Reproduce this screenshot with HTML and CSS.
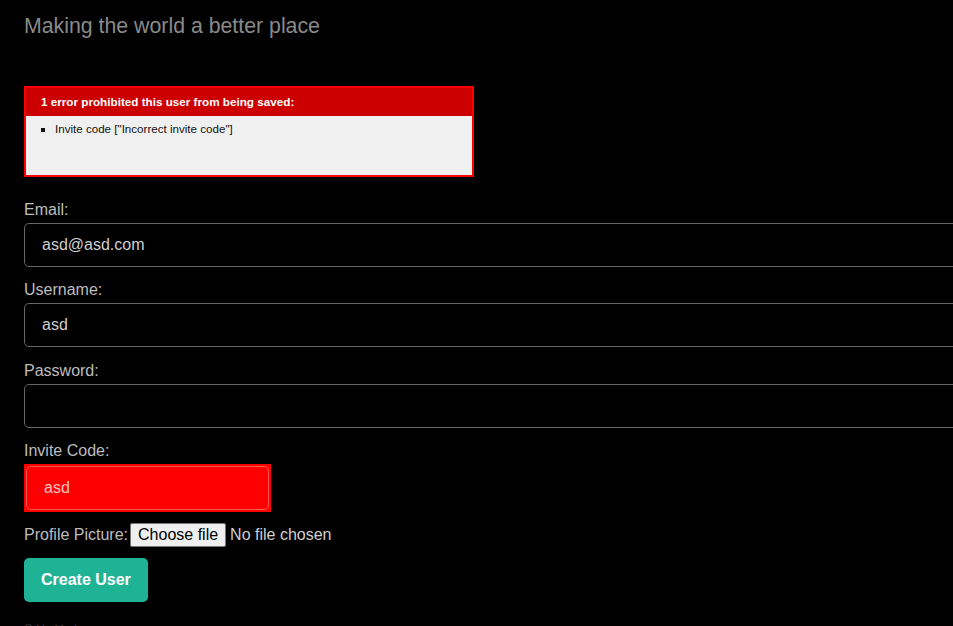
FILE: index.html
```html
<!DOCTYPE html>
<html>
<head>
<meta charset="utf-8">
<title>New User</title>
<link rel="stylesheet" href="styles.css">
</head>
<body>
<div class="page">
  <h1 class="tagline">Making the world a better place</h1>

  <form class="user-form">
    <div class="error-explanation">
      <h2>1 error prohibited this user from being saved:</h2>
      <ul>
        <li>Invite code ["Incorrect invite code"]</li>
      </ul>
    </div>

    <div class="field">
      <label class="field-label">Email:</label>
      <input class="text-input" type="text" value="asd@asd.com">
    </div>
    <div class="field">
      <label class="field-label">Username:</label>
      <input class="text-input" type="text" value="asd">
    </div>
    <div class="field">
      <label class="field-label">Password:</label>
      <input class="text-input" type="password" value="">
    </div>
    <div class="field">
      <label class="field-label">Invite Code:</label>
      <div class="field-with-errors">
        <input class="text-input error-input" type="text" value="asd">
      </div>
    </div>
    <div class="file-row">
      <span class="file-label">Profile Picture:</span>
      <button class="file-button" type="button">Choose file</button>
      <span class="file-status">No file chosen</span>
    </div>
    <div class="actions">
      <button class="submit-btn" type="button">Create User</button>
    </div>
  </form>

  <footer class="footer">© Untitled</footer>
</div>
</body>
</html>
```

FILE: styles.css
```css
html, body {
  margin: 0;
  padding: 0;
  background: #000;
  overflow: hidden;
}

body {
  font-family: "Liberation Sans", Arial, sans-serif;
  color: #bdbdbd;
}

.page {
  padding: 12px 24px 0 24px;
}

.tagline {
  margin: 0;
  font-size: 21.3px;
  font-weight: normal;
  line-height: 28px;
  color: #8a8a8a;
}

.user-form {
  margin-top: 46px;
  width: 1000px;
}

.error-explanation {
  width: 450px;
  box-sizing: border-box;
  border: 2px solid #ff0000;
  background: #f0f0f0;
  height: 91px;
  margin-bottom: 24px;
}

.error-explanation h2 {
  margin: 0;
  height: 28px;
  line-height: 28px;
  padding-left: 15px;
  background: #cc0000;
  color: #fff;
  font-size: 11.7px;
  font-weight: bold;
}

.error-explanation ul {
  margin: 5px 0 0 0;
  padding-left: 29px;
}

.error-explanation li {
  list-style: square;
  font-size: 11.6px;
  line-height: 15px;
  color: #111;
}

.field {
  margin-bottom: 14.33px;
}

.field-label {
  display: block;
  font-size: 16px;
  line-height: 18.4px;
  color: #bdbdbd;
}

.text-input {
  display: block;
  margin-top: 3.6px;
  width: 1000px;
  height: 44px;
  box-sizing: border-box;
  padding: 0 17px;
  background: #000;
  border: 1px solid #666;
  border-radius: 5px;
  color: #cfcfcf;
  font-family: "Liberation Sans", Arial, sans-serif;
  font-size: 16px;
  outline: none;
}

.field-with-errors {
  display: inline-block;
  margin-top: 3.6px;
  padding: 2px;
  background: #ff0000;
}

.field-with-errors .error-input {
  margin-top: 0;
  width: 243px;
  background: #ff0000;
  border-color: #ff5a5a;
  color: #ffc4c4;
}

.file-row {
  display: flex;
  align-items: center;
  margin-top: -3px;
  font-size: 16px;
  color: #bdbdbd;
}

.file-label {
  margin-right: 2px;
}

.file-button {
  height: 24px;
  box-sizing: border-box;
  padding: 0 7px;
  font-family: "Liberation Sans", Arial, sans-serif;
  font-size: 16px;
  color: #000;
  background: #efefef;
  border: 1px solid #767676;
  border-radius: 2px;
  margin-right: 4px;
}

.file-status {
  color: #cfcfcf;
}

.actions {
  margin-top: 11px;
}

.submit-btn {
  height: 44px;
  padding: 0 17px;
  background: #1fb396;
  border: none;
  border-radius: 5px;
  color: #fff;
  font-family: "Liberation Sans", Arial, sans-serif;
  font-size: 16px;
  font-weight: bold;
}

.footer {
  margin-top: 21px;
  font-size: 12px;
  color: #4a4a4a;
}
```
